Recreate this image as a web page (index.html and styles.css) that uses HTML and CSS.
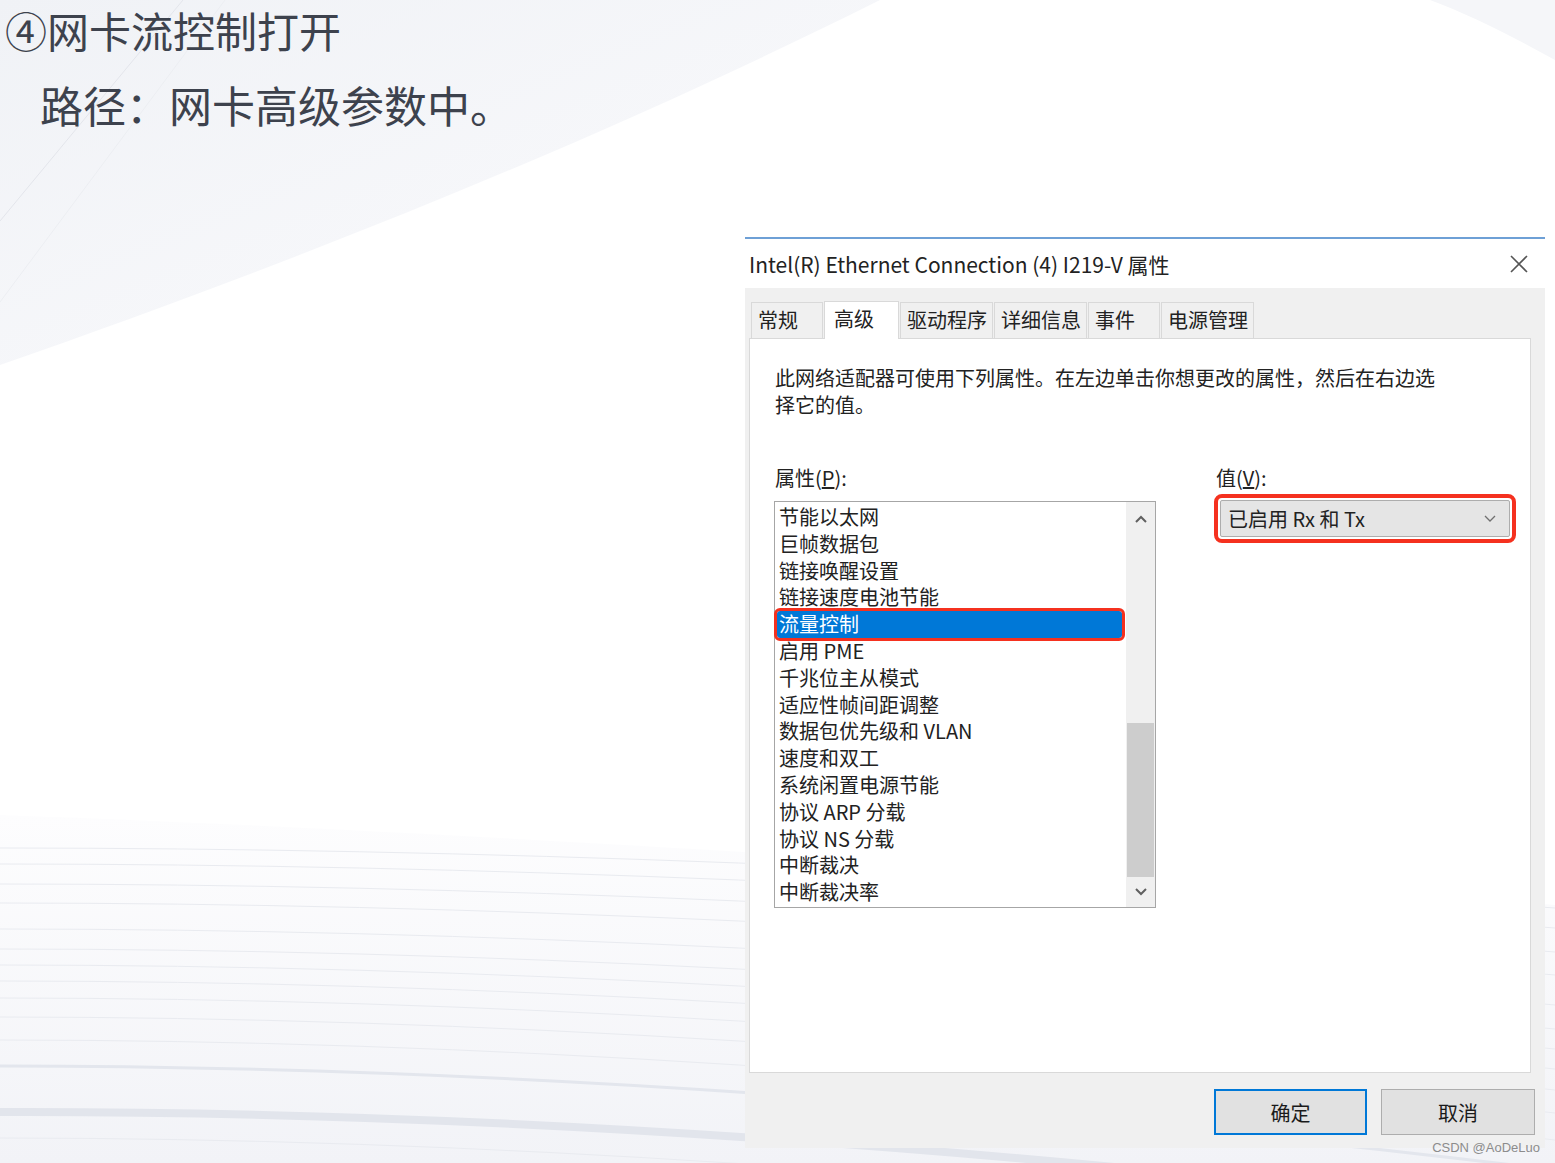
FILE: index.html
```html
<!DOCTYPE html>
<html lang="zh-CN">
<head>
  <meta charset="UTF-8">
  <meta name="viewport" content="width=device-width, initial-scale=1.0">
  <title>网卡流控制打开</title>
  <link rel="stylesheet" href="styles.css">
</head>
<body>
  <div class="page">
    <svg class="backdrop" viewBox="0 0 1555 1163" xmlns="http://www.w3.org/2000/svg">
      <defs>
        <linearGradient id="tl" x1="0" y1="0" x2="1" y2="1">
          <stop offset="0" stop-color="#f0f2f6"/>
          <stop offset="1" stop-color="#fbfbfd"/>
        </linearGradient>
        <linearGradient id="bt" x1="0" y1="0" x2="0" y2="1">
          <stop offset="0" stop-color="#fdfdfe"/>
          <stop offset="1" stop-color="#f2f3f7"/>
        </linearGradient>
      </defs>
      <path d="M0 0 H880 C620 130 330 250 0 365 Z" fill="url(#tl)"/>
      <path d="M0 221 L183 0" stroke="#e3e5eb" fill="none"/>
      <path d="M0 302 L225 0" stroke="#eceef2" fill="none"/>
      <path d="M1430 0 H1555 V60 C1510 35 1470 15 1430 0 Z" fill="#f5f6f9"/>
      <path d="M0 815 C420 830 900 860 1555 905 V1163 H0 Z" fill="url(#bt)"/>
      <g fill="none" stroke="#e9ebf0">
        <path d="M0 848 Q700 848 1555 908"/>
        <path d="M0 864 Q700 864 1555 928"/>
        <path d="M0 884 Q700 884 1555 952"/>
        <path d="M0 903 Q700 903 1555 975"/>
        <path d="M0 929 Q700 929 1555 1005"/>
        <path d="M0 949 Q700 949 1555 1029"/>
        <path d="M0 965 Q700 965 1555 1049"/>
        <path d="M0 981 Q700 981 1555 1069"/>
        <path d="M0 998 Q700 998 1555 1090"/>
        <path d="M0 1017 Q700 1017 1555 1113"/>
        <path d="M0 1040 Q700 1040 1555 1140"/>
        <path d="M0 1066 Q700 1066 1555 1170" stroke="#e3e6ed" stroke-width="3"/>
        <path d="M0 1112 Q700 1110 1555 1215" stroke="#e2e5ec" stroke-width="8"/>
        <path d="M0 1138 Q700 1138 1555 1240"/>
      </g>
    </svg>

    <div class="slide">
      <h1 class="title">④网卡流控制打开</h1>
      <p class="subtitle">路径：网卡高级参数中。</p>

      <div class="dialog">
        <div class="titlebar">
          <span>Intel(R) Ethernet Connection (4) I219-V 属性</span>
          <svg class="close" width="18" height="18" viewBox="0 0 18 18">
            <path d="M1 1 L17 17 M17 1 L1 17" stroke="#555" stroke-width="1.6" fill="none"/>
          </svg>
        </div>

        <div class="dialog-body">
          <div class="tabs">
            <div class="tab">常规</div>
            <div class="tab active">高级</div>
            <div class="tab">驱动程序</div>
            <div class="tab">详细信息</div>
            <div class="tab">事件</div>
            <div class="tab">电源管理</div>
          </div>

          <div class="panel">
            <p class="desc">此网络适配器可使用下列属性。在左边单击你想更改的属性，然后在右边选<br>择它的值。</p>

            <div class="fields">
              <div class="props">
                <div class="label">属性(<u>P</u>):</div>
                <div class="listbox">
                  <ul class="items">
                    <li class="item">节能以太网</li>
                    <li class="item">巨帧数据包</li>
                    <li class="item">链接唤醒设置</li>
                    <li class="item">链接速度电池节能</li>
                    <li class="item selected">流量控制</li>
                    <li class="item">启用 PME</li>
                    <li class="item">千兆位主从模式</li>
                    <li class="item">适应性帧间距调整</li>
                    <li class="item">数据包优先级和 VLAN</li>
                    <li class="item">速度和双工</li>
                    <li class="item">系统闲置电源节能</li>
                    <li class="item">协议 ARP 分载</li>
                    <li class="item">协议 NS 分载</li>
                    <li class="item">中断裁决</li>
                    <li class="item">中断裁决率</li>
                  </ul>
                  <div class="scrollbar">
                    <div class="sb-btn">
                      <svg width="12" height="8" viewBox="0 0 12 8"><path d="M1 7 L6 2 L11 7" stroke="#606060" stroke-width="2" fill="none"/></svg>
                    </div>
                    <div class="sb-track"><div class="sb-thumb"></div></div>
                    <div class="sb-btn down">
                      <svg width="12" height="8" viewBox="0 0 12 8"><path d="M1 1 L6 6 L11 1" stroke="#606060" stroke-width="2" fill="none"/></svg>
                    </div>
                  </div>
                </div>
              </div>

              <div class="value">
                <div class="label">值(<u>V</u>):</div>
                <div class="combo">
                  <span>已启用 Rx 和 Tx</span>
                  <svg width="12" height="7" viewBox="0 0 12 7"><path d="M1 1 L6 6 L11 1" stroke="#707070" stroke-width="1.3" fill="none"/></svg>
                </div>
              </div>
            </div>
          </div>

          <div class="buttons">
            <button class="btn default">确定</button>
            <button class="btn">取消</button>
          </div>
        </div>
      </div>
    </div>

    <div class="watermark">CSDN @AoDeLuo</div>
  </div>
</body>
</html>
```

FILE: styles.css
```css
body {
  margin: 0;
  background: #fff;
  font-family: "Noto Sans CJK SC", "Noto Sans", sans-serif;
  color: #222;
}

.page {
  position: relative;
  width: 1555px;
  height: 1163px;
  overflow: hidden;
}

.backdrop {
  position: absolute;
  left: 0;
  top: 0;
  width: 1555px;
  height: 1163px;
}

.slide {
  position: relative;
  padding-top: 5px;
}

.title {
  margin: 0 0 0 5px;
  font-size: 42px;
  line-height: 50px;
  font-weight: 400;
  color: #3d424d;
}

.subtitle {
  margin: 22px 0 0 40px;
  font-size: 43px;
  line-height: 54px;
  color: #3d424d;
}

/* dialog window */
.dialog {
  margin: 106px 0 0 745px;
  width: 800px;
  background: #f0f0f0;
}

.titlebar {
  height: 49px;
  border-top: 2px solid #6ea0d6;
  background: #fff;
  display: flex;
  align-items: center;
  justify-content: space-between;
  padding: 0 17px 0 4px;
  font-size: 21px;
  color: #222;
}

.dialog-body {
  padding: 14px 14px 13px 4px;
}

.tabs {
  display: flex;
  align-items: flex-end;
  height: 36px;
  padding-left: 2px;
  position: relative;
  z-index: 1;
}

.tab {
  box-sizing: border-box;
  min-width: 72px;
  height: 36px;
  padding: 0 5px 0 6px;
  margin-right: 1px;
  border: 1px solid #d9d9d9;
  border-bottom: none;
  background: #f0f0f0;
  font-size: 20px;
  line-height: 34px;
}

.tab.active {
  min-width: 75px;
  height: 38px;
  margin-bottom: -1px;
  padding-left: 9px;
  background: #fff;
}

.panel {
  box-sizing: border-box;
  height: 735px;
  background: #fff;
  border: 1px solid #d9d9d9;
  padding: 25px 20px 0 25px;
}

.desc {
  margin: 0;
  font-size: 20px;
  line-height: 27px;
}

.fields {
  display: flex;
  margin-top: 46px;
}

.label {
  font-size: 20px;
  line-height: 27px;
  padding-left: 1px;
}

.props {
  width: 384px;
  margin-left: -1px;
}

.listbox {
  margin-top: 10px;
  height: 407px;
  box-sizing: border-box;
  border: 1px solid #a6a6a6;
  display: flex;
}

.items {
  flex: 1;
  list-style: none;
  margin: 0;
  padding: 2px 4px 0 2px;
}

.item {
  height: 26.8px;
  line-height: 26.8px;
  padding-left: 2px;
  font-size: 20px;
  white-space: nowrap;
}

.item.selected {
  background: #0078d7;
  color: #fff;
  outline: 3px solid #f5311f;
  border-radius: 3px;
}

.scrollbar {
  width: 29px;
  background: #f0f0f0;
  display: flex;
  flex-direction: column;
}

.sb-btn {
  height: 34px;
  display: flex;
  align-items: center;
  justify-content: center;
}

.sb-btn.down {
  height: 30px;
}

.sb-track {
  flex: 1;
}

.sb-thumb {
  margin: 187px 1px 0;
  height: 154px;
  background: #cdcdcd;
}

.value {
  margin-left: 59px;
}

.combo {
  margin: 9px 0 0 5px;
  width: 290px;
  height: 37px;
  box-sizing: border-box;
  background: #e5e5e5;
  border: 1px solid #adadad;
  border-radius: 2px;
  outline: 4px solid #f5311f;
  outline-offset: 2px;
  display: flex;
  align-items: center;
  justify-content: space-between;
  padding: 0 13px 0 7px;
  font-size: 20px;
}

.buttons {
  display: flex;
  justify-content: flex-end;
  gap: 14px;
  margin: 16px -4px 0 0;
}

.btn {
  width: 154px;
  height: 46px;
  box-sizing: border-box;
  padding: 0;
  background: #e1e1e1;
  border: 1px solid #adadad;
  font-family: inherit;
  font-size: 20px;
  color: #1a1a1a;
}

.btn.default {
  width: 153px;
  border: 2px solid #0078d7;
}

.watermark {
  position: absolute;
  right: 15px;
  top: 1140px;
  font-family: "Liberation Sans", sans-serif;
  font-size: 13px;
  color: #8c8c8c;
}
```
